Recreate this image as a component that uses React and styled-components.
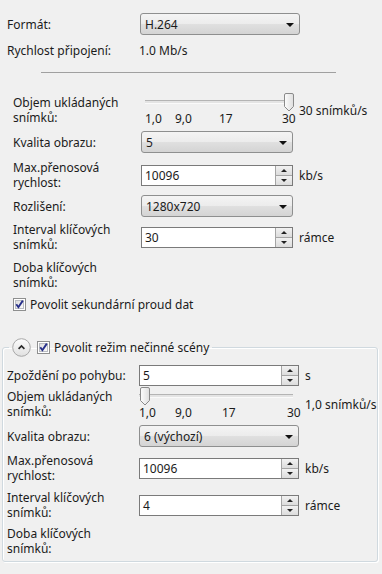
import React from 'react';
import styled, { createGlobalStyle } from 'styled-components';

const GlobalStyle = createGlobalStyle`
  html, body {
    margin: 0;
    padding: 0;
    background: #f0f0f0;
  }
  body {
    font-family: "Noto Sans", "DejaVu Sans", sans-serif;
    font-size: 12px;
    color: #1b1b1b;
  }
`;

const Page = styled.div`
  width: 382px;
  min-height: 574px;
  box-sizing: border-box;
  padding-top: 13px;
  background: #f0f0f0;
`;

const Section = styled.div`
  padding-left: ${p => p.$indent || 0}px;
`;

const Row = styled.div`
  display: grid;
  grid-template-columns: ${p => p.$label}px ${p => p.$field}px auto;
  align-items: center;
  margin-top: ${p => p.$top || 0}px;
`;

const Label = styled.div`
  line-height: 15px;
  white-space: pre-line;
`;

const Value = styled.div`
  line-height: 15px;
  margin-left: -1px;
`;

const Unit = styled.div`
  padding-left: 6px;
  line-height: 15px;
  white-space: nowrap;
`;

const Separator = styled.hr`
  border: none;
  height: 1px;
  background: #a0a0a0;
  width: 295px;
  margin: 14px 0 0 41px;
`;

const SelectBox = styled.div`
  height: 22px;
  box-sizing: border-box;
  border: 1px solid #8e8f8f;
  border-radius: 3px;
  background: linear-gradient(#f4f4f4 0%, #ececec 50%, #e0e0e0 50%, #d4d4d4 100%);
  display: flex;
  align-items: center;
  justify-content: space-between;
  padding: 0 5px 0 4px;
`;

const Arrow = styled.span`
  width: 0;
  height: 0;
  border-left: 4px solid transparent;
  border-right: 4px solid transparent;
  border-top: 4px solid #111;
  margin-top: 1px;
`;

const SpinBox = styled.div`
  height: 21px;
  box-sizing: border-box;
  border: 1px solid #7a7a7a;
  background: #fff;
  display: flex;
`;

const SpinValue = styled.span`
  flex: 1;
  padding-left: 3px;
  line-height: 19px;
`;

const SpinButtons = styled.div`
  width: 16px;
  display: flex;
  flex-direction: column;
  border-left: 1px solid #a5a5a5;
`;

const SpinButton = styled.div`
  flex: 1;
  background: linear-gradient(#f2f2f2, #dcdcdc);
  border-top: ${p => (p.$down ? '1px solid #a5a5a5' : 'none')};
  display: flex;
  align-items: center;
  justify-content: center;
`;

const SmallTri = styled.span`
  width: 0;
  height: 0;
  border-left: 3px solid transparent;
  border-right: 3px solid transparent;
  ${p => (p.$down ? 'border-top: 3px solid #222;' : 'border-bottom: 3px solid #222;')}
`;

const SliderBox = styled.div`
  position: relative;
  height: 30px;
`;

const Track = styled.div`
  position: absolute;
  top: 5px;
  left: ${p => p.$left}px;
  width: ${p => p.$width}px;
  height: 2px;
  border-top: 1px solid #b4b4b4;
  background: #e4e4e4;
  border-bottom: 1px solid #fafafa;
`;

const Thumb = styled.svg`
  position: absolute;
  top: -2px;
  left: ${p => p.$left}px;
`;

const Tick = styled.span`
  position: absolute;
  top: 16px;
  left: ${p => p.$left}px;
  line-height: 15px;
`;

const CheckRow = styled.label`
  display: flex;
  align-items: center;
  gap: 4px;
  line-height: 15px;
  margin-top: ${p => p.$top || 0}px;
`;

const Group = styled.fieldset`
  margin: 26px 0 0 2px;
  width: 374px;
  box-sizing: border-box;
  border: 1px solid #d0d9df;
  border-radius: 3px;
  box-shadow: 1px 1px 0 #fff, inset 1px 1px 0 #fff;
  padding: 0 0 5px 4px;
`;

const Legend = styled.legend`
  display: flex;
  align-items: center;
  padding: 0 3px;
  margin-left: 2px;
  line-height: 15px;
`;

const Expander = styled.svg`
  margin-right: 6px;
`;

const Select = ({ value }) => (
  <SelectBox>
    <span>{value}</span>
    <Arrow />
  </SelectBox>
);

const Spin = ({ value }) => (
  <SpinBox>
    <SpinValue>{value}</SpinValue>
    <SpinButtons>
      <SpinButton>
        <SmallTri />
      </SpinButton>
      <SpinButton $down>
        <SmallTri $down />
      </SpinButton>
    </SpinButtons>
  </SpinBox>
);

const Slider = ({ track, thumb, ticks }) => (
  <SliderBox>
    <Track $left={track[0]} $width={track[1]} />
    {ticks.map(([t, x]) => (
      <Tick key={t} $left={x}>{t}</Tick>
    ))}
    <Thumb $left={thumb} width="10" height="19" viewBox="0 0 10 19">
      <defs>
        <linearGradient id={`th${thumb}`} x1="0" y1="0" x2="1" y2="0">
          <stop offset="0" stopColor="#fdfdfd" />
          <stop offset="1" stopColor="#dedede" />
        </linearGradient>
      </defs>
      <path
        d="M2 0.5 H8 Q9.5 0.5 9.5 2 V13.5 L5 18 L0.5 13.5 V2 Q0.5 0.5 2 0.5 Z"
        fill={`url(#th${thumb})`}
        stroke="#8a8a8a"
      />
    </Thumb>
  </SliderBox>
);

const CheckIcon = () => (
  <svg width="13" height="13" viewBox="0 0 13 13">
    <defs>
      <linearGradient id="cb" x1="0" y1="0" x2="1" y2="1">
        <stop offset="0" stopColor="#dcdcdc" />
        <stop offset="1" stopColor="#fbfbfb" />
      </linearGradient>
    </defs>
    <rect x="0.5" y="0.5" width="12" height="12" fill="#fff" stroke="#8e8f8f" />
    <rect x="2.5" y="2.5" width="8" height="8" fill="url(#cb)" stroke="#b9bcc2" />
    <path d="M3.3 6.3 L5.4 9.2 L9.8 2.6" stroke="#262f8a" strokeWidth="1.9" fill="none" />
  </svg>
);

const App = () => (
  <Page>
    <GlobalStyle />
    <Section $indent={7}>
      <Row $label={133} $field={160}>
        <Label>Formát:</Label>
        <Select value="H.264" />
      </Row>
      <Row $label={133} $field={160} $top={8}>
        <Label>Rychlost připojení:</Label>
        <Value>1.0 Mb/s</Value>
      </Row>
    </Section>
    <Separator />
    <Section $indent={13}>
      <Row $label={128} $field={152} $top={22}>
        <Label>{'Objem ukládaných\nsnímků:'}</Label>
        <Slider
          track={[4, 145]}
          thumb={143}
          ticks={[['1,0', 4], ['9,0', 34], ['17', 78], ['30', 141]]}
        />
        <Unit>30 snímků/s</Unit>
      </Row>
      <Row $label={128} $field={152} $top={6}>
        <Label>Kvalita obrazu:</Label>
        <Select value="5" />
      </Row>
      <Row $label={128} $field={152} $top={7}>
        <Label>{'Max.přenosová\nrychlost:'}</Label>
        <Spin value="10096" />
        <Unit>kb/s</Unit>
      </Row>
      <Row $label={128} $field={152} $top={5}>
        <Label>Rozlišení:</Label>
        <Select value="1280x720" />
      </Row>
      <Row $label={128} $field={152} $top={5}>
        <Label>{'Interval klíčových\nsnímků:'}</Label>
        <Spin value="30" />
        <Unit>rámce</Unit>
      </Row>
      <Row $label={128} $field={152} $top={8}>
        <Label>{'Doba klíčových\nsnímků:'}</Label>
      </Row>
      <CheckRow $top={7}>
        <CheckIcon />
        Povolit sekundární proud dat
      </CheckRow>
    </Section>
    <Group>
      <Legend>
        <Expander width="19" height="19" viewBox="0 0 19 19">
          <defs>
            <linearGradient id="ex" x1="0" y1="0" x2="0" y2="1">
              <stop offset="0" stopColor="#fdfdfd" />
              <stop offset="1" stopColor="#e0e0e0" />
            </linearGradient>
          </defs>
          <circle cx="9.5" cy="9.5" r="8.8" fill="url(#ex)" stroke="#a8a8a8" />
          <path d="M6.6 10.8 L9.5 7.9 L12.4 10.8" stroke="#2a2a2a" strokeWidth="1.7" fill="none" />
        </Expander>
        <CheckRow>
          <CheckIcon />
          Povolit režim nečinné scény
        </CheckRow>
      </Legend>
      <Row $label={132} $field={160} $top={8}>
        <Label>Zpoždění po pohybu:</Label>
        <Spin value="5" />
        <Unit>s</Unit>
      </Row>
      <Row $label={132} $field={160} $top={3}>
        <Label>{'Objem ukládaných\nsnímků:'}</Label>
        <Slider
          track={[0, 154]}
          thumb={1}
          ticks={[['1,0', 0], ['9,0', 36], ['17', 83], ['30', 148]]}
        />
        <Unit>1,0 snímků/s</Unit>
      </Row>
      <Row $label={132} $field={160} $top={6}>
        <Label>Kvalita obrazu:</Label>
        <Select value="6 (výchozí)" />
      </Row>
      <Row $label={132} $field={160} $top={6}>
        <Label>{'Max.přenosová\nrychlost:'}</Label>
        <Spin value="10096" />
        <Unit>kb/s</Unit>
      </Row>
      <Row $label={132} $field={160} $top={7}>
        <Label>{'Interval klíčových\nsnímků:'}</Label>
        <Spin value="4" />
        <Unit>rámce</Unit>
      </Row>
      <Row $label={132} $field={160} $top={6}>
        <Label>{'Doba klíčových\nsnímků:'}</Label>
      </Row>
    </Group>
  </Page>
);

export default App;
